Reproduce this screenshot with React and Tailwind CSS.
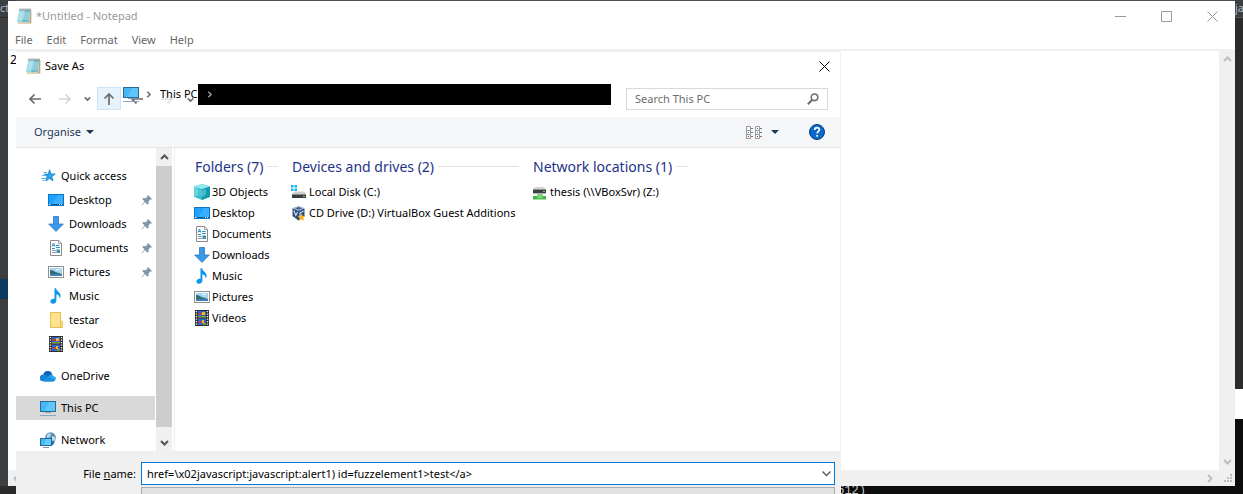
import React from "react";

function NotepadIcon() {
  return (
    <svg className="size-4 shrink-0" viewBox="0 0 16 16" aria-hidden="true">
      <path d="M3.5 2h11.8v13.5H2z" fill="#b9a77a" />
      <path d="M3.5 2h10.8L13.2 14.5H1z" fill="#f4f8f8" />
      <path d="M3.3 2.2H14L12.6 14H.8z" fill="#9fdbe6" />
      <path d="M9 2.2h5L12.6 14H6z" fill="#6fbccb" />
      <path d="M3 5h10.4M2.7 7h10.4M2.4 9h10.4M2.1 11h10.4" stroke="#c9eef3" strokeWidth=".7" />
      <path d="M4 .6v2M6 .6v2M8 .6v2M10 .6v2M12 .6v2M14 .6v2" stroke="#56666b" strokeWidth="1" />
    </svg>
  );
}

function MonitorIcon() {
  return (
    <svg className="size-4 shrink-0" viewBox="0 0 16 16" aria-hidden="true">
      <rect x=".5" y="1.5" width="15" height="10" fill="#45b7f5" stroke="#2a6a99" />
      <path d="M9 2h6v9H5z" fill="#6fd0ff" opacity=".6" />
      <path d="M5 12.5h6" stroke="#8aa3b8" />
      <path d="M0 15.5h16" stroke="#8fa6bf" />
    </svg>
  );
}

function DesktopIcon() {
  return (
    <svg className="size-4 shrink-0" viewBox="0 0 16 16" aria-hidden="true">
      <rect x=".5" y="2.5" width="15" height="11" fill="#1ea2ff" stroke="#0d76c4" />
      <path d="M10 3h5v9H4z" fill="#4db8ff" opacity=".6" />
      <path d="M1 12.5h14" stroke="#0b5c9c" />
      <path d="M1 12.5h1.5M11 12.5h1M13 12.5h1" stroke="#d8efff" />
    </svg>
  );
}

function DownloadIcon() {
  return (
    <svg className="size-4 shrink-0" viewBox="0 0 16 16" aria-hidden="true">
      <path d="M5.5.5h5V8h4.8L8 15.4.7 8h4.8z" fill="#3c98e8" stroke="#2478c2" strokeWidth=".8" />
    </svg>
  );
}

function DocumentIcon() {
  return (
    <svg className="size-4 shrink-0" viewBox="0 0 16 16" aria-hidden="true">
      <path d="M2.500.5h8.200l2.800 2.800v12.200h-11z" fill="#fff" stroke="#8b8b8b" />
      <path d="M10.500.8v2.800h2.800" fill="none" stroke="#8b8b8b" strokeWidth=".8" />
      <path d="M4 6.500 5.500 3 7 6.500M4.500 5.500h2M8 5.500h3.500M8 7.500h4M4 8.500h3" fill="none" stroke="#2d92c8" />
      <path d="M4 10.500h4M4 12.500h4" stroke="#8a9aa5" />
      <rect x="8.500" y="9.500" width="3.500" height="3.500" fill="#3f8fb5" />
    </svg>
  );
}

function PictureIcon() {
  return (
    <svg className="size-4 shrink-0" viewBox="0 0 16 16" aria-hidden="true">
      <rect x=".5" y="2.500" width="15" height="11" fill="#fff" stroke="#8f8f8f" />
      <rect x="2" y="4" width="12" height="8" fill="#a8d4f3" />
      <path d="M2 6c3 0 5 2 7 2.500L14 10v2H2z" fill="#2e6d70" />
      <path d="M2 10h12v2H2z" fill="#3f80b8" />
      <path d="M8 5.500h4" stroke="#e8f5ff" />
    </svg>
  );
}

function MusicIcon() {
  return (
    <svg className="size-4 shrink-0" viewBox="0 0 16 16" aria-hidden="true">
      <path d="M6.500.2h1.600C8.600 3.600 13 4.300 12.600 8.200c-.1 1-.5 1.800-1.100 2.500.5-2.600-.9-4-3.100-4.400v6.200c0 1.900-1.500 3.300-3.400 3.300-1.500 0-2.600-.9-2.600-2.200 0-1.600 1.500-2.900 3.200-2.900.3 0 .6 0 .9.100z" fill="#0a96ec" />
    </svg>
  );
}

function FolderIcon() {
  return (
    <svg className="size-4 shrink-0" viewBox="0 0 16 16" aria-hidden="true">
      <path d="M2.500.5h10v8.800h1.900v6.200H2.500z" fill="#ffe28f" stroke="#e6bd4c" />
      <path d="M12.500 9.500v6" stroke="#e6bd4c" />
    </svg>
  );
}

function VideoIcon() {
  return (
    <svg className="size-4 shrink-0" viewBox="0 0 16 16" aria-hidden="true">
      <rect x="1" y="0" width="14" height="16" fill="#2c2c2e" />
      <rect x="4" y="1" width="8" height="6.500" fill="#2f63c8" />
      <rect x="4" y="8.500" width="8" height="6.500" fill="#2f63c8" />
      <path d="M5 3h3v2H5zM5 11h3v2H5z" fill="#d33b3b" />
      <path d="M8 2h3v3H8zM8 10h2v3H8z" fill="#efb82a" />
      <path d="M4 6h8v1.500H4zM9 13h3v2H9z" fill="#79a22a" />
      <path d="M2.500 1v14M13.500 1v14" stroke="#f0f0f0" strokeWidth="1.400" strokeDasharray="1.300 1.200" />
    </svg>
  );
}

function CubeIcon() {
  return (
    <svg className="size-4 shrink-0" viewBox="0 0 16 16" aria-hidden="true">
      <path d="M8 0l8 2.500v10.200L8 16 0 12.700V2.500z" fill="#35bccb" />
      <path d="M8 0l8 2.500-8 2.700L0 2.500z" fill="#93e7ee" />
      <path d="M8 5.200l8-2.700v10.200L8 16z" fill="#1599ad" />
      <path d="M0 2.500l4 1.300v8L0 12.700z" fill="#64d6e0" />
      <path d="M4 5l4 1.500L12 5v6l-4 2-4-2z" fill="#57cbd8" opacity=".7" />
    </svg>
  );
}

function StarIcon() {
  return (
    <svg className="size-4 shrink-0" viewBox="0 0 16 16" aria-hidden="true">
      <path d="M8.600 1.800l1.300 4.100 4.300.1-3.400 2.600 1.200 4.200-3.600-2.400-3.600 2.600 1.400-4.300L3.400 6.200l3.800-.1z" fill="#2ba3ee" stroke="#1180c9" strokeWidth=".8" />
      <path d="M2.500 4.500h3.500M1 7.500h4M0 10.500h5M1.500 12.500h2" stroke="#5cb5ea" />
    </svg>
  );
}

function CloudIcon() {
  return (
    <svg className="size-4 shrink-0" viewBox="0 0 16 16" aria-hidden="true">
      <path d="M3.300 7A4.600 4.600 0 0 1 12.300 6.500L8 10z" fill="#0a64b8" />
      <path d="M3.300 6.500a3.400 3.400 0 0 0-.2 6.800L9 9.500C7.500 7.500 5.500 6.400 3.300 6.500z" fill="#1484d8" />
      <path d="M8.500 8.500c1-2.500 4-3 5-.3 3 0 3.500 4.500-.5 5.200H3z" fill="#2ba7ee" />
      <path d="M8.500 8.500 15 12c-.5.900-1.200 1.300-2 1.400H3z" fill="#1b91e0" />
    </svg>
  );
}

function NetworkIcon() {
  return (
    <svg className="size-4 shrink-0" viewBox="0 0 16 16" aria-hidden="true">
      <circle cx="10.500" cy="5.500" r="5.300" fill="#5a91b5" />
      <path d="M7 3c2-2 3-2 4-1l-1 3-3 1zM12 4l3 1v3l-3 1z" fill="#b7dce9" />
      <path d="M12 9.500h3l-2 3.500h-1z" fill="#1d6fa5" />
      <rect x=".5" y="6.500" width="11" height="7" fill="#43b9f5" stroke="#216a9d" />
      <path d="M6 7h5v6H4z" fill="#7ed6ff" opacity=".6" />
      <path d="M3 15.500h6" stroke="#7e9ab5" />
    </svg>
  );
}

function DriveIcon() {
  return (
    <svg className="size-4 shrink-0" viewBox="0 0 16 16" aria-hidden="true">
      <path d="M0 1h2.500v2.500H0zM3.500 1H6v2.500H3.500zM0 4.500h2.500V7H0zM3.500 4.500H6V7H3.500z" fill="#12b1ef" />
      <path d="M3.500 7.500h9.500l2 2.500h-14z" fill="#cfcfcf" />
      <rect x="1" y="10" width="14" height="4" fill="#3a3d3f" />
      <path d="M1 10.500h14" stroke="#8c8f92" />
      <rect x="12" y="12" width="2" height="1" fill="#54e05c" />
    </svg>
  );
}

function VirtualBoxIcon() {
  return (
    <svg className="size-4 shrink-0" viewBox="0 0 16 16" aria-hidden="true">
      <path d="M7.500 1.500l6 2v7.500l-6 4.500-6-4.500V3.500z" fill="#294b7e" />
      <path d="M7.500 1l6.200 2.300-6.200 2.700L1.300 3.300z" fill="#a9bbd4" />
      <path d="M4 3.200l3.500-1.200 3.800 1.300-3.800 1.500z" fill="#47648f" />
      <path d="M2.800 5.500l2 5 1.700-3.500M9 8l3.500-2M9 11V7.500" fill="none" stroke="#dce6f3" strokeWidth="1.100" />
      <path d="M10.500 8.500l1.200 2.300 2.600.4-1.900 1.900.5 2.600-2.400-1.200-2.400 1.200.5-2.600-1.900-1.900 2.600-.4z" fill="#f9b52b" />
    </svg>
  );
}

function NetDriveIcon() {
  return (
    <svg className="size-4 shrink-0" viewBox="0 0 16 16" aria-hidden="true">
      <path d="M3.500 3h8l3 2.500h-14z" fill="#d2d2d2" />
      <rect x="1" y="5.500" width="13" height="4" fill="#3d4043" />
      <rect x="11" y="7" width="2" height="1" fill="#54e05c" />
      <path d="M1 9.500h13" stroke="#b5b5b5" />
      <path d="M5.500 10h5v2H14v3.500H1V12h4.500z" fill="#45b845" />
      <path d="M5.500 10h5v4.500h-5z" fill="#77d673" />
    </svg>
  );
}

function PinIcon() {
  return (
    <svg className="size-3 shrink-0" viewBox="0 0 12 12" aria-hidden="true">
      <path d="M7 1 11 5l-1 .8-1-.2L7.500 7.500l.2 2.200-1 1L4 8.200.8 11.500.4 11.200 3.500 7.600 1.300 5l1-1 2.400.3 1.900-2-.3-1z" fill="#8495a4" />
    </svg>
  );
}

function Chevron({ dir, className }) {
  const d = {
    up: "M1 6 4.500 2.500 8 6",
    down: "M1 3 4.500 6.500 8 3",
    right: "M3 1 6.500 4.500 3 8",
    left: "M6 1 2.500 4.500 6 8",
  }[dir];
  return (
    <svg className={className} viewBox="0 0 9 9" fill="none" stroke="currentColor" strokeWidth="2" aria-hidden="true">
      <path d={d} />
    </svg>
  );
}

function Arrow({ className }) {
  return (
    <svg className={className} viewBox="0 0 12 12" fill="none" stroke="currentColor" strokeWidth="1.700" aria-hidden="true">
      <path d="M12 6H1M5.500 1.500 1 6l4.500 4.500" />
    </svg>
  );
}

const places = [
  { name: "Desktop", Icon: DesktopIcon, pinned: true },
  { name: "Downloads", Icon: DownloadIcon, pinned: true },
  { name: "Documents", Icon: DocumentIcon, pinned: true },
  { name: "Pictures", Icon: PictureIcon, pinned: true },
  { name: "Music", Icon: MusicIcon },
  { name: "testar", Icon: FolderIcon },
  { name: "Videos", Icon: VideoIcon },
];

const groups = [
  {
    title: "Folders (7)",
    width: "w-[84px]",
    items: [
      ["3D Objects", CubeIcon],
      ["Desktop", DesktopIcon],
      ["Documents", DocumentIcon],
      ["Downloads", DownloadIcon],
      ["Music", MusicIcon],
      ["Pictures", PictureIcon],
      ["Videos", VideoIcon],
    ],
  },
  {
    title: "Devices and drives (2)",
    width: "w-[228px]",
    items: [
      ["Local Disk (C:)", DriveIcon],
      ["CD Drive (D:) VirtualBox Guest Additions", VirtualBoxIcon],
    ],
  },
  {
    title: "Network locations (1)",
    width: "w-[156px]",
    items: [["thesis (\\\\VBoxSvr) (Z:)", NetDriveIcon]],
  },
];

function Backdrop() {
  return (
    <div className="flex h-full justify-between bg-[#0c0c0c]">
      <div className="flex w-4 flex-col bg-[#3c3f41]">
        <div className="h-[18px] border-b border-[#2b2b2b] text-[11px] leading-4 text-[#a9b7c6]">ct</div>
        <div className="h-[261px]" />
        <div className="h-5 bg-[#0d3a5f]" />
        <div className="grow" />
        <div className="h-2 bg-[#2b2b2b]" />
      </div>
      <div className="flex grow flex-col justify-between">
        <div className="h-px bg-[#4b4d4f]" />
        <div className="flex h-2 justify-end pr-[369px] font-['Liberation_Mono',monospace] text-[12px] leading-[10px] text-[#cccccc]">612)</div>
      </div>
      <div className="flex w-2 flex-col">
        <div className="h-[18px] border-b border-[#555] bg-[#3c3f41] text-[11px] leading-4 text-[#a9b7c6]">ja</div>
        <div className="h-[371px] bg-[#2b2b2b]" />
        <div className="h-[30px] bg-white" />
      </div>
    </div>
  );
}

function Notepad() {
  return (
    <section aria-label="Notepad" className="absolute top-px right-2 bottom-2 left-2 flex flex-col bg-white">
      <header className="flex h-[30px] shrink-0 items-center pl-2 text-[#999]">
        <NotepadIcon />
        <h1 className="ml-1 grow text-[11px]">*Untitled - Notepad</h1>
        <button aria-label="Minimise" className="flex h-full w-[46px] items-center justify-center">
          <svg className="size-[11px]" viewBox="0 0 11 11" stroke="currentColor"><path d="M0 5.500h11" /></svg>
        </button>
        <button aria-label="Maximise" className="flex h-full w-[46px] items-center justify-center">
          <svg className="size-[11px]" viewBox="0 0 11 11" stroke="currentColor" fill="none"><path d="M.5.5h10v10H.5z" /></svg>
        </button>
        <button aria-label="Close" className="flex h-full w-[46px] items-center justify-center">
          <svg className="size-[11px]" viewBox="0 0 11 11" stroke="currentColor"><path d="M.5.5l10 10M10.500.5l-10 10" /></svg>
        </button>
      </header>
      <nav className="flex h-[18px] shrink-0 items-center gap-[14px] pl-[7px] text-[#666]">
        {["File", "Edit", "Format", "View", "Help"].map((m) => (
          <button key={m}>{m}</button>
        ))}
      </nav>
      <div className="flex min-h-0 grow border-t-2 border-[#f0f0f0]">
        <textarea aria-label="Text" defaultValue="2" className="min-w-0 grow resize-none overflow-hidden bg-white px-[2px] py-px text-[12px] leading-4 text-black outline-none" />
        <div className="flex w-4 flex-col items-center justify-between bg-[#f0f0f0] py-1 text-[#bdbdbd]">
          <Chevron dir="up" className="size-[9px]" />
          <Chevron dir="down" className="size-[9px]" />
        </div>
      </div>
      <div className="flex h-4 shrink-0 items-center justify-between bg-[#f0f0f0] pr-[3px] pl-1 text-[#bdbdbd]">
        <Chevron dir="left" className="size-[9px]" />
        <div className="flex items-center gap-[10px]">
          <Chevron dir="right" className="size-[9px]" />
          <svg className="size-2" viewBox="0 0 8 8" fill="currentColor" aria-hidden="true">
            <path d="M6 0h2v2H6zM3 3h2v2H3zM6 3h2v2H6zM0 6h2v2H0zM3 6h2v2H3zM6 6h2v2H6z" />
          </svg>
        </div>
      </div>
    </section>
  );
}

function AddressBar() {
  return (
    <div className="flex h-[35px] shrink-0 items-start pt-[5px] pl-[13px] text-[#6b6b6b]">
      <button aria-label="Back" className="flex h-[23px] w-3 items-center"><Arrow className="size-3" /></button>
      <button aria-label="Forward" className="ml-[18px] flex h-[23px] w-3 items-center text-[#d5d5d5]"><Arrow className="size-3 rotate-180" /></button>
      <button aria-label="Recent locations" className="ml-[13px] flex h-[23px] w-2 items-center"><Chevron dir="down" className="size-[7px]" /></button>
      <button aria-label="Up" className="ml-[5px] flex h-[23px] w-6 items-center justify-center border border-[#cce4f7] bg-[#e5f1fb]">
        <Arrow className="size-3 rotate-90" />
      </button>
      <div className="relative ml-[2px] flex h-[14px] grow items-center">
        <div className="absolute top-[6px] left-2 flex items-center">
          <Arrow className="size-3" />
          <Arrow className="ml-[18px] size-3 rotate-180 text-[#e0e0e0]" />
          <Chevron dir="down" className="ml-[14px] size-[7px]" />
        </div>
        <div className="relative flex grow items-center text-black">
          <MonitorIcon />
          <Chevron dir="right" className="ml-[6px] size-[7px] text-[#6b6b6b]" />
          <span className="ml-2 w-[38px] whitespace-nowrap">This PC</span>
          <div className="relative flex h-[21px] grow items-center bg-black pl-2">
            <Chevron dir="right" className="size-[7px] text-[#999]" />
          </div>
        </div>
      </div>
      <label className="mt-px mr-3 ml-[15px] flex h-[22px] w-[202px] items-center border border-[#d9d9d9] bg-white px-2">
        <input aria-label="Search This PC" placeholder="Search This PC" className="min-w-0 grow bg-transparent outline-none placeholder:text-[#6d6d6d]" />
        <svg className="size-3" viewBox="0 0 12 12" fill="none" stroke="#6d6d6d" aria-hidden="true">
          <circle cx="7.500" cy="4.300" r="3.300" strokeWidth="1.600" />
          <path d="M5.300 6.800.8 11.300" strokeWidth="2" />
        </svg>
      </label>
    </div>
  );
}

function Toolbar() {
  return (
    <div className="flex h-[31px] shrink-0 items-center border-b border-[#e6e7e8] bg-[#f5f6f7] pr-[15px] pl-[18px] text-[#1e395b]">
      <button className="flex items-center gap-[5px]">
        Organise
        <svg className="h-1 w-2" viewBox="0 0 8 4" fill="currentColor" aria-hidden="true"><path d="M0 0h8L4 4z" /></svg>
      </button>
      <div className="grow" />
      <button aria-label="Change view" className="flex items-center">
        <svg className="h-[13px] w-4" viewBox="0 0 16 13" fill="none" aria-hidden="true">
          <path d="M.5.5h4v12h-4zM.5 4.500h4M.5 8.500h4M9.500.5h4v12h-4zM9.500 4.500h4M9.500 8.500h4" stroke="#9b9b9b" />
          <path d="M5 2.500h2M5 6.500h2M5 10.500h2M14 2.500h2M14 6.500h2M14 10.500h2" stroke="#777" />
          <path d="M2 6.500h1M11 2.500h1M11 6.500h1" stroke="#3a8fd8" />
          <path d="M2 10.500h1M11 10.500h1" stroke="#d03030" />
        </svg>
        <svg className="ml-[9px] h-1 w-2" viewBox="0 0 8 4" fill="currentColor" aria-hidden="true"><path d="M0 0h8L4 4z" /></svg>
      </button>
      <button aria-label="Help" className="ml-[30px]">
        <svg className="size-4" viewBox="0 0 16 16" aria-hidden="true">
          <circle cx="8" cy="8" r="7.500" fill="#0b68cc" stroke="#0a3f7c" />
          <path d="M5.700 5.900c0-3.100 4.700-3 4.700-.3 0 1.600-2.200 1.800-2.200 3.800M8.200 11v1.800" fill="none" stroke="#fff" strokeWidth="1.700" />
        </svg>
      </button>
    </div>
  );
}

function Sidebar() {
  return (
    <div className="flex w-[159px] shrink-0 border-r border-[#eeeeee]">
      <nav className="flex w-[139px] flex-col gap-2 overflow-hidden pt-4">
        <ul>
          <li className="flex h-6 items-center gap-1 pl-[25px]"><StarIcon />Quick access</li>
          {places.map(({ name, Icon, pinned }) => (
            <li key={name} className="flex h-6 items-center pr-[2px] pl-8">
              <Icon />
              <span className="ml-[5px] grow">{name}</span>
              {pinned && <PinIcon />}
            </li>
          ))}
        </ul>
        <a href="#onedrive" className="flex h-6 shrink-0 items-center gap-[5px] pl-6"><CloudIcon />OneDrive</a>
        <a href="#pc" className="flex h-6 shrink-0 items-center gap-[5px] bg-[#d9d9d9] pl-6"><MonitorIcon />This PC</a>
        <a href="#network" className="flex h-6 shrink-0 items-center gap-[5px] pl-6"><NetworkIcon />Network</a>
      </nav>
      <div className="ml-px flex w-4 flex-col items-center bg-[#f0f0f0] text-[#555]">
        <div className="flex h-[18px] items-center"><Chevron dir="up" className="size-[9px]" /></div>
        <div className="w-full grow bg-[#cdcdcd]" />
        <div className="flex h-6 items-end pb-1"><Chevron dir="down" className="size-[9px]" /></div>
      </div>
    </div>
  );
}

function SaveAs() {
  return (
    <section role="dialog" aria-label="Save As" className="absolute top-[51px] bottom-0 left-4 flex w-full max-w-[825px] flex-col overflow-hidden border-t border-r border-[#f0f0f0] bg-white">
      <header className="flex h-[30px] shrink-0 items-center pr-[10px] pb-[2px] pl-[9px]">
        <NotepadIcon />
        <h2 className="ml-1 grow">Save As</h2>
        <button aria-label="Close dialog">
          <svg className="size-[11px]" viewBox="0 0 11 11" stroke="#000"><path d="M.5.5l10 10M10.500.5l-10 10" /></svg>
        </button>
      </header>
      <AddressBar />
      <Toolbar />
      <div className="flex min-h-0 grow">
        <Sidebar />
        <main className="flex grow items-start gap-[13px] pt-[6px] pl-[19px]">
          {groups.map((g) => (
            <section key={g.title} className={`shrink-0 ${g.width}`}>
              <h3 className="mb-[2px] flex h-[25px] items-center gap-1 pl-px text-[14px] whitespace-nowrap text-[#1e3287] after:h-px after:grow after:bg-[#e2e2e2]">{g.title}</h3>
              <ul>
                {g.items.map(([name, Icon]) => (
                  <li key={name} className="flex h-[21px] items-center gap-[2px] whitespace-nowrap"><Icon />{name}</li>
                ))}
              </ul>
            </section>
          ))}
        </main>
      </div>
      <footer className="flex h-[43px] shrink-0 flex-col overflow-hidden bg-[#f0f0f0] pt-[11px] pr-[5px]">
        <div className="flex h-[23px] shrink-0 items-center">
          <label htmlFor="file-name" className="w-[125px] shrink-0 pr-[5px] text-right">File <u>n</u>ame:</label>
          <div className="flex h-[23px] grow items-center border border-[#0078d7] bg-white pr-[3px] pl-[5px]">
            <input id="file-name" defaultValue={"href=\\x02javascript:javascript:alert1) id=fuzzelement1>test</a>"} className="min-w-0 grow bg-transparent outline-none" />
            <button aria-label="Show file names" className="text-[#555]">
              <svg className="size-[9px]" viewBox="0 0 9 9" fill="none" stroke="currentColor" strokeWidth="1.300" aria-hidden="true"><path d="M.5 2.500 4.500 6.500l4-4" /></svg>
            </button>
          </div>
        </div>
        <div className="mt-[2px] ml-[125px] h-6 shrink-0 border border-[#adadad] bg-[#e1e1e1]" />
      </footer>
    </section>
  );
}

export default function App() {
  return (
    <div className="relative h-screen overflow-hidden font-['Noto_Sans',sans-serif] text-[11px] leading-4 text-black">
      <Backdrop />
      <Notepad />
      <SaveAs />
    </div>
  );
}
